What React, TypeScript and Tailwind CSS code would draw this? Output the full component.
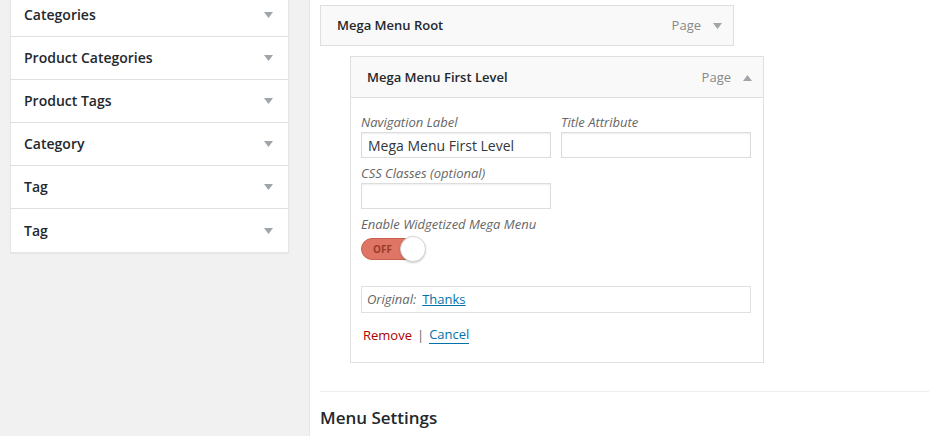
import React from "react";

const font = { fontFamily: '"Open Sans", "Noto Sans", Arial, sans-serif' };

function Down() {
  return (
    <svg width="9" height="6" viewBox="0 0 9 6" className="shrink-0">
      <path d="M0 0 L9 0 L4.5 6 Z" fill="#a0a5aa" />
    </svg>
  );
}
function Up() {
  return (
    <svg width="9" height="6" viewBox="0 0 9 6" className="shrink-0">
      <path d="M0 6 L9 6 L4.5 0 Z" fill="#a0a5aa" />
    </svg>
  );
}

const sections = ["Categories", "Product Categories", "Product Tags", "Category", "Tag", "Tag"];

export default function App() {
  return (
    <div className="flex w-[929px] h-[436px] overflow-hidden bg-white text-[#23282d]" style={font}>
      <div className="w-[310px] shrink-0 bg-[#f1f1f1] border-r border-[#e5e5e5]">
        <div className="ml-[10px] w-[279px] -mt-[7px] bg-white border border-[#e5e5e5] shadow-[0_1px_1px_rgba(0,0,0,0.04)]">
          {sections.map((s, i) => (
            <div
              key={i}
              className={`flex items-center justify-between h-[43px] pl-[13px] pr-[15px] ${i < sections.length - 1 ? "border-b border-[#dfdfdf]" : ""}`}
            >
              <span className="text-[14px] font-semibold leading-none">{s}</span>
              <Down />
            </div>
          ))}
        </div>
      </div>

      <div className="flex-1 pl-[10px]">
        <div className="mt-[5px] w-[414px] h-[41px] bg-[#f9f9f9] border border-[#dfdfdf] flex items-center justify-between pl-[16px] pr-[11px] pt-[1px]">
          <span className="text-[13px] font-semibold">Mega Menu Root</span>
          <div className="flex items-center gap-[12px]">
            <span className="text-[13px] text-[#888]">Page</span>
            <Down />
          </div>
        </div>

        <div className="ml-[30px] mt-[10px] w-[414px] border border-[#dfdfdf] bg-white">
          <div className="h-[41px] bg-[#f9f9f9] border-b border-[#dfdfdf] flex items-center justify-between pl-[16px] pr-[11px] pt-[1px]">
            <span className="text-[13px] font-semibold">Mega Menu First Level</span>
            <div className="flex items-center gap-[12px]">
              <span className="text-[13px] text-[#888]">Page</span>
              <Up />
            </div>
          </div>
          <div className="pl-[10px] pr-[12px] pt-[15px] pb-[18px]">
            <div className="flex gap-[10px]">
              <div className="w-[190px]">
                <div className="h-[18px] leading-[18px] text-[13px] italic text-[#666]">Navigation Label</div>
                <div className="mt-[1px] h-[26px] border border-[#ddd] shadow-[inset_0_1px_2px_rgba(0,0,0,0.07)] flex items-center px-[6px] text-[14px] text-[#32373c]">
                  Mega Menu First Level
                </div>
              </div>
              <div className="w-[190px]">
                <div className="h-[18px] leading-[18px] text-[13px] italic text-[#666]">Title Attribute</div>
                <div className="mt-[1px] h-[26px] border border-[#ddd] shadow-[inset_0_1px_2px_rgba(0,0,0,0.07)]" />
              </div>
            </div>
            <div className="mt-[6px] w-[190px]">
              <div className="h-[18px] leading-[18px] text-[13px] italic text-[#666]">CSS Classes (optional)</div>
              <div className="mt-[1px] h-[26px] border border-[#ddd] shadow-[inset_0_1px_2px_rgba(0,0,0,0.07)]" />
            </div>
            <div className="mt-[6px]">
              <div className="h-[18px] leading-[18px] text-[13px] italic text-[#666]">Enable Widgetized Mega Menu</div>
              <div className="mt-[3px] relative w-[65px] h-[26px]">
                <div className="absolute left-0 top-[2px] w-[60px] h-[22px] rounded-full bg-[#df7565] border border-[#c9604f] flex items-center pl-[11px]">
                  <span className="text-[10px] font-bold text-[#9b3a2b] leading-none">OFF</span>
                </div>
                <div className="absolute left-[39px] top-0 w-[26px] h-[26px] rounded-full bg-white border border-[#d5d5d5] shadow-[0_1px_2px_rgba(0,0,0,0.2)]" />
              </div>
            </div>
            <div className="mt-[24px] h-[27px] border border-[#dfdfdf] flex items-center pl-[5px] text-[13px]">
              <span className="italic text-[#666]">Original:</span>
              <span className="ml-[6px] text-[#0073aa] underline">Thanks</span>
            </div>
            <div className="mt-[12px] flex items-center text-[13px] leading-[18px] pl-[2px]">
              <span className="text-[#a00]">Remove</span>
              <span className="mx-[5px] text-[#666]">|</span>
              <span className="text-[#0073aa] border-b border-[#0073aa]">Cancel</span>
            </div>
          </div>
        </div>

        <div className="mt-[28px] border-t border-[#eeeeee]" />
        <div className="mt-[14px] text-[17px] font-semibold leading-[24px]">Menu Settings</div>
      </div>
    </div>
  );
}
